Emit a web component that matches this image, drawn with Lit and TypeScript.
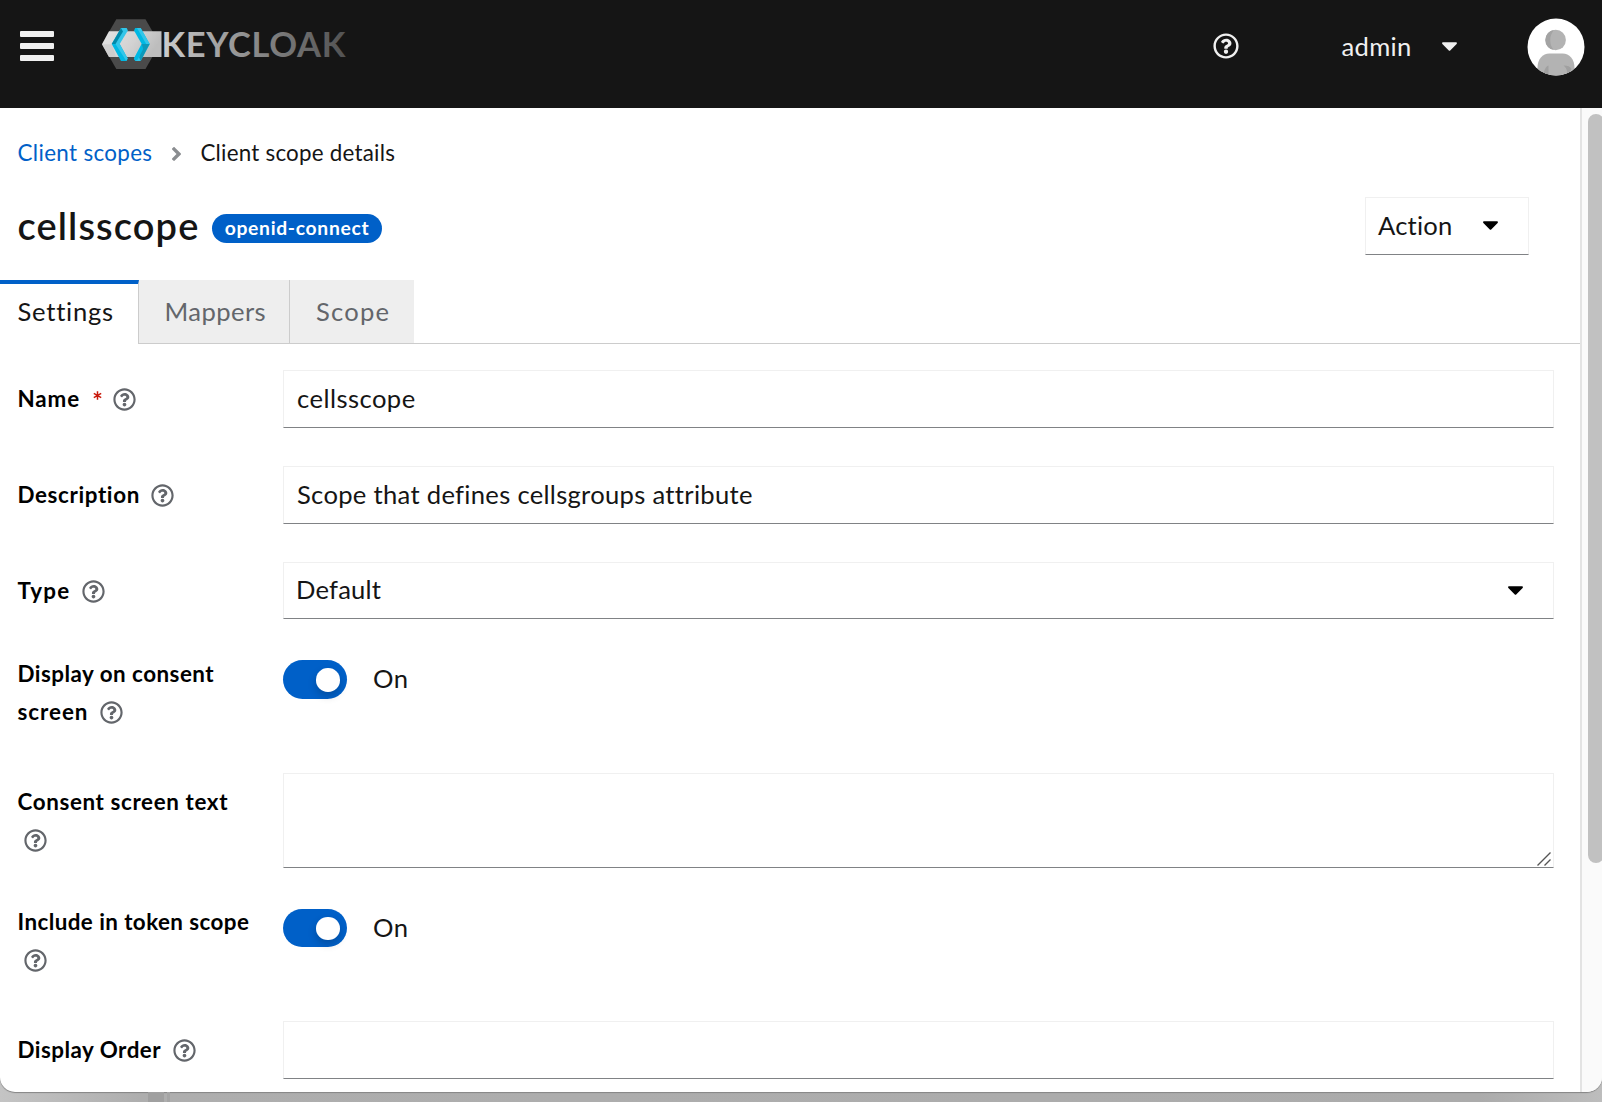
import { LitElement, html, css, svg, nothing } from "lit";
import { customElement } from "lit/decorators.js";

const QUESTION =
  "M256 8C119.043 8 8 119.083 8 256c0 136.997 111.043 248 248 248s248-111.003 248-248C504 119.083 392.957 8 256 8zm0 448c-110.532 0-200-89.431-200-200 0-110.495 89.472-200 200-200 110.491 0 200 89.471 200 200 0 110.53-89.431 200-200 200zm107.244-255.2c0 67.052-72.421 68.084-72.421 92.863V300c0 6.627-5.373 12-12 12h-45.647c-6.627 0-12-5.373-12-12v-8.659c0-35.745 27.1-50.034 47.579-61.516 17.561-9.845 28.324-16.541 28.324-29.579 0-17.246-21.999-28.693-39.784-28.693-23.189 0-33.894 10.977-48.942 29.969-4.057 5.12-11.46 6.071-16.666 2.124l-27.824-21.098c-5.107-3.872-6.251-11.066-2.644-16.363C184.846 131.491 214.94 112 261.794 112c49.071 0 101.45 38.304 101.45 88.8zM298 368c0 23.159-18.841 42-42 42s-42-18.841-42-42 18.841-42 42-42 42 18.841 42 42z";
const CARET =
  "M31.3 192h257.3c17.8 0 26.7 21.5 14.1 34.1L174.1 354.8c-7.8 7.8-20.5 7.8-28.3 0L17.2 226.1C4.6 213.5 13.5 192 31.3 192z";
const ANGLE =
  "M224.3 273l-136 136c-9.4 9.4-24.6 9.4-33.9 0l-22.6-22.6c-9.4-9.4-9.4-24.6 0-33.9l96.4-96.4-96.4-96.4c-9.4-9.4-9.4-24.6 0-33.9L54.3 103c9.4-9.4 24.6-9.4 33.9 0l136 136c9.5 9.4 9.5 24.6.1 34z";

const help = (cls = "") => html`<svg class="help ${cls}" viewBox="0 0 512 512"><path d=${QUESTION}></path></svg>`;
const caret = () => html`<svg class="caret" viewBox="10 190 300 172"><path d=${CARET}></path></svg>`;

@customElement("app-root")
export class AppRoot extends LitElement {
  static styles = css`
    :host {
      display: block;
      width: 1602px;
      height: 1102px;
      overflow: hidden;
      background: linear-gradient(90deg, #c4c4c4 0, #aeaeae 140px, #ababab 1480px, #bdbdbd 1602px);
      font: 400 25.6px/38px Lato, "Noto Sans", sans-serif;
      font-variant-ligatures: none;
      color: #151515;
    }
    * { box-sizing: border-box; }
    svg { display: block; flex: none; }
    .window {
      height: 1092px;
      display: flex;
      flex-direction: column;
      background: #fff;
      border-radius: 0 0 15px 15px;
      overflow: hidden;
      box-shadow: 0 1px 1px #858585;
    }
    .desk { display: flex; height: 10px; padding-left: 148px; gap: 3px; }
    .desk-a { width: 16px; background: #a0a0a0; }
    .desk-b { width: 3px; background: #a5a5a5; }

    .masthead {
      flex: none;
      height: 108px;
      display: flex;
      align-items: flex-start;
      background: #151515;
      color: #f0f0f0;
      fill: #f0f0f0;
    }
    .burger { margin: 31px 0 0 20px; display: flex; flex-direction: column; gap: 6px; }
    .burger i { width: 34px; height: 6px; border-radius: 1px; background: #f0f0f0; }
    .logo { margin: 16px 0 0 46px; }
    .masthead .help { width: 26px; height: 26px; margin: 33px 0 0 auto; fill: #f0f0f0; }
    .user { display: flex; align-items: flex-start; margin: 27px 0 0 102.5px; width: 185px; letter-spacing: 0.3px; }
    .user .caret { margin: 15px 0 0 30.5px; }
    .avatar { margin: 18px 17.5px 0 0; }

    .body { flex: 1; display: flex; min-height: 0; }
    .page { width: 1580px; }
    .track {
      width: 22px;
      border-left: 2px solid #e3e3e3;
      background: #fafafa;
      padding: 6px 0 0 6px;
      overflow: hidden;
    }
    .thumb { width: 16px; height: 749px; border-radius: 8px; background: #c1c1c1; }

    .crumbs { display: flex; align-items: center; height: 34px; margin: 28px 0 0 17.5px; font-size: 22.4px; line-height: 34px; color: #151515; }
    .crumbs a { color: #0060c8; letter-spacing: 0.34px; }
    .crumbs svg { width: 9px; height: 14px; margin: 1px 19.5px 0 19.5px; fill: #8a8d90; }
    .crumbs span { letter-spacing: 0.22px; }

    .title { display: flex; height: 110px; padding-left: 17.5px; align-items: flex-start; }
    h1 { margin: 25.500px 0 0; width: 194.5px; font-size: 38px; font-weight: 600; line-height: 58px; letter-spacing: 1.1px; color: #151515; white-space: nowrap; }
    .badge {
      width: 170px;
      height: 29px;
      margin-top: 44px;
      border-radius: 15px;
      background: #0060c8;
      color: #fff;
      font-size: 19.3px;
      font-weight: 700;
      letter-spacing: 0.69px;
      line-height: 27px;
      text-align: center;
    }
    .action {
      width: 164px;
      height: 58px;
      margin: 27px 51px 0 auto;
      padding-left: 12px;
      display: flex;
      border: 1px solid #f0f0f0;
      border-bottom-color: #808285;
      line-height: 54px;
      letter-spacing: 0.2px;
    }
    .action .caret { margin: 23px 0 0 auto; }
    .caret { width: 15px; height: 9px; fill: inherit; }
    .action .caret { margin-right: 30px; }

    .tabs { display: flex; height: 64px; color: #63666b; }
    .tab { background: #eee; border-right: 1px solid #ccc; border-bottom: 1px solid #ccc; line-height: 63px; }
    .settings { width: 139px; padding-left: 17.5px; background: #fff; border-top: 4px solid #0060c8; border-bottom: 0; line-height: 55px; color: #151515; letter-spacing: 0.75px; }
    .mappers { width: 151px; padding-left: 25.5px; letter-spacing: 0.42px; }
    .scope { width: 124px; padding-left: 26px; border-right: 0; letter-spacing: 1.2px; }
    .rest { flex: 1; border-bottom: 1px solid #ccc; }

    .form {
      display: grid;
      grid-template-columns: 265.500px 1271px;
      grid-template-rows: 96px 96px 92px 119px 129px 119px 58px;
      padding: 26px 0 0 17.500px;
    }
    .label { padding-top: 10px; font-size: 22.4px; font-weight: 700; color: #000; letter-spacing: 0.62px; white-space: nowrap; }
    .label .line { display: flex; height: 38px; align-items: center; }
    .label.top { padding-top: 1px; }
    .w-name { letter-spacing: 0.9px; }
    .w-type { letter-spacing: 1.2px; }
    .w-screen { letter-spacing: 0.95px; }
    .w-display { letter-spacing: 0.48px; }
    .w-include { letter-spacing: 0.43px; }
    .w-order { letter-spacing: 0.48px; }
    .help { width: 23px; height: 23px; margin: 0 0 0 11.5px; fill: #63666b; }
    .help.first { margin-left: 6px; }
    .req { width: 9px; height: 9px; margin: -7px 0 0 12.5px; stroke: #c9190b; stroke-width: 1.5; }
    .input {
      height: 58px;
      padding-left: 13px;
      border: 1px solid #f0f0f0;
      border-bottom-color: #808285;
      line-height: 54px;
    }
    .v-name { letter-spacing: 0.45px; }
    .v-desc { letter-spacing: 0.3px; }
    .select { display: flex; justify-content: space-between; height: 57px; line-height: 52px; padding: 0 30px 0 12px; letter-spacing: 0.2px; }
    .select .caret { margin-top: 23px; }
    .area { height: 95px; display: flex; align-items: flex-end; justify-content: flex-end; padding: 0 2px 1px 0; }
    .area svg { width: 14px; height: 14px; stroke: #555; stroke-width: 1.4; }
    .toggle { display: flex; gap: 26px; padding-top: 6px; letter-spacing: 0.4px; line-height: 37px; }
    .switch { width: 64px; height: 39px; padding: 8px 7px 0 33px; border-radius: 20px; background: #0060c8; }
    .knob { width: 23.5px; height: 23.5px; border-radius: 50%; background: #fff; box-shadow: 0 4px 8px rgba(0, 0, 0, 0.2); }
    .second { padding-top: 7px; }
    .second .switch { height: 38px; }
    .second .knob { height: 22.5px; }
  `;

  private logo() {
    return html`<svg class="logo" width="250" height="56" viewBox="100 16 250 56">
      <defs>
        <linearGradient id="word" gradientUnits="userSpaceOnUse" x1="163" y1="0" x2="346" y2="0">
          <stop offset="0" stop-color="#cccccc"></stop>
          <stop offset=".3" stop-color="#a3a3a3"></stop>
          <stop offset=".65" stop-color="#787878"></stop>
          <stop offset="1" stop-color="#525252"></stop>
        </linearGradient>
        <linearGradient id="band" x1="0" x2="1" y1="0" y2=".3">
          <stop offset="0" stop-color="#e4e4e4"></stop>
          <stop offset=".6" stop-color="#d2d2d2"></stop>
          <stop offset="1" stop-color="#bdbdbd"></stop>
        </linearGradient>
      </defs>
      <path fill="#4a4a4a" d="M116.300 19.300h29.200L159.700 44l-14.200 25h-29.200L102 44z"></path>
      <path fill="url(#band)" d="M109 31.300h52.500V57H109l-7-12.800z"></path>
      <path fill="#c6c6c6" opacity=".6" d="M102 44.200l10 0 4 12.800H109z"></path>
      <path fill="#33c6e9" d="M121 28h5.700l1.200 2.500-8.200 13.500h-8z"></path>
      <path fill="#008aaa" d="M121 28l2 3.500-7.500 12.500h-3.800z"></path>
      <path fill="#00b8e3" d="M111.700 44l9.300 17h5.300l1.400-2.500L119.700 44z"></path>
      <path fill="#33c6e9" d="M115.500 44h4.200l8 14.500-1.400 2.500z"></path>
      <path fill="#00b8e3" d="M135.200 28h5.500l9 16h-8l-7.700-13.500z"></path>
      <path fill="#33c6e9" d="M137 28h3.700l9 16h-3.500z"></path>
      <path fill="#33c6e9" d="M141.700 44h8l-9 17h-5.400l-1.300-2.500z"></path>
      <path fill="#008aaa" d="M149.700 44l-9 17-1.500-3.500 2.500-13.500z" opacity=".75"></path>
      <path fill="#00b8e3" d="M141.700 44l1.500 5-5.500 10.500-2.400 1.500-1.300-2.500z"></path>
      <text x="161.500" y="56.700" font-family="Lato, sans-serif" font-weight="700" font-size="34.500" textLength="183.800" fill="url(#word)">KEYCLOAK</text>
    </svg>`;
  }

  private avatar() {
    return svg`<svg class="avatar" width="58" height="58" viewBox="0 0 58 58">
      <defs><clipPath id="face"><circle cx="29" cy="29" r="28.500"></circle></clipPath></defs>
      <circle cx="29" cy="29" r="28.500" fill="#fff"></circle>
      <g clip-path="url(#face)">
        <circle cx="28.700" cy="22" r="10.200" fill="#b3b3b3"></circle>
        <path fill="#a3a3a3" d="M27 11.900a10.200 10.200 0 0 0 0 20.200c-5-5-5-15 0-20.200z"></path>
        <path fill="#b3b3b3" d="M10.500 58V50c0-9 5-14.500 12-14.500h13c7 0 12 5.500 12 14.500v8z"></path>
        <path fill="#a0a0a0" d="M21.500 58V47.500c-3 1.500-4.500 4-5 10.500zM36.500 47.500c4 0 7 1 8 3.500l-4 7c0-6-1.500-8.500-4-10.500z"></path>
      </g>
    </svg>`;
  }

  private toggle(cls = "") {
    return html`<div class="toggle ${cls}">
      <div class="switch"><div class="knob"></div></div>
      <span>On</span>
    </div>`;
  }

  private label(text: string, textClass = "", required = false) {
    return html`<div class="label">
      <div class="line">
        <span class=${textClass}>${text}</span>
        ${required
          ? html`<svg class="req" viewBox="0 0 9 9"><path d="M4.500 .3v8.400M.8 2.400l7.400 4.200M.8 6.600l7.400-4.200"></path></svg>`
          : nothing}
        ${help()}
      </div>
    </div>`;
  }

  render() {
    return html`
      <div class="window">
        <header class="masthead">
          <div class="burger"><i></i><i></i><i></i></div>
          ${this.logo()} ${help()}
          <div class="user"><span>admin</span>${caret()}</div>
          ${this.avatar()}
        </header>
        <div class="body">
          <main class="page">
            <nav class="crumbs">
              <a>Client scopes</a>
              <svg viewBox="24 96 208 320"><path d=${ANGLE}></path></svg>
              <span>Client scope details</span>
            </nav>
            <div class="title">
              <h1>cellsscope</h1>
              <div class="badge">openid-connect</div>
              <div class="action"><span>Action</span>${caret()}</div>
            </div>
            <div class="tabs">
              <div class="tab settings">Settings</div>
              <div class="tab mappers">Mappers</div>
              <div class="tab scope">Scope</div>
              <div class="rest"></div>
            </div>
            <div class="form">
              ${this.label("Name", "w-name", true)}
              <div class="input v-name">cellsscope</div>
              ${this.label("Description")}
              <div class="input v-desc">Scope that defines cellsgroups attribute</div>
              ${this.label("Type", "w-type")}
              <div class="input select"><span>Default</span>${caret()}</div>
              <div class="label top">
                <div class="line w-display">Display on consent</div>
                <div class="line"><span class="w-screen">screen</span>${help()}</div>
              </div>
              ${this.toggle()}
              <div class="label">
                <div class="line">Consent screen text</div>
                <div class="line">${help("first")}</div>
              </div>
              <div class="input area"><svg viewBox="0 0 14 14"><path d="M.5 13.500l13-13M7.500 13.500l6-6"></path></svg></div>
              <div class="label top">
                <div class="line w-include">Include in token scope</div>
                <div class="line">${help("first")}</div>
              </div>
              ${this.toggle("second")}
              ${this.label("Display Order", "w-order")}
              <div class="input"></div>
            </div>
          </main>
          <div class="track"><div class="thumb"></div></div>
        </div>
      </div>
      <div class="desk"><i class="desk-a"></i><i class="desk-b"></i></div>
    `;
  }
}
